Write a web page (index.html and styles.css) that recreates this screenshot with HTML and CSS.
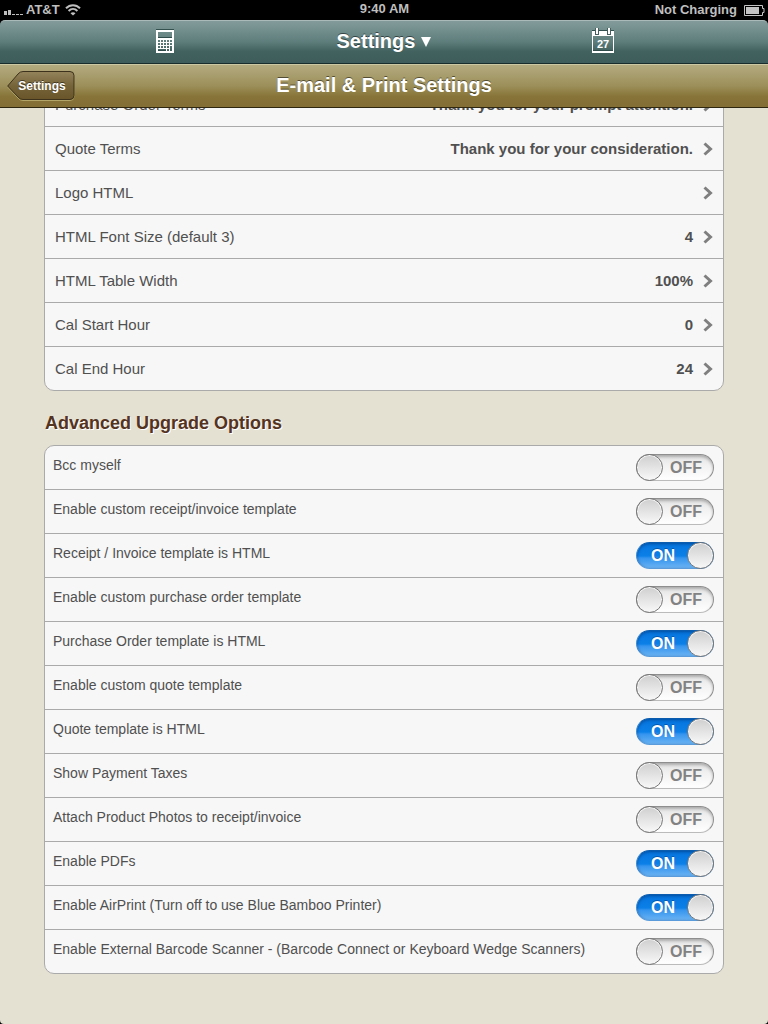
FILE: index.html
```html
<!DOCTYPE html>
<html lang="en">
<head>
    <meta charset="UTF-8">
    <meta name="viewport" content="width=device-width, initial-scale=1.0">
    <title>E-mail &amp; Print Settings</title>
    <link rel="stylesheet" href="styles.css">
</head>
<body>
    <div class="status-bar">
        <div class="carrier">
            <svg width="20" height="6" viewBox="0 0 20 6" fill="#bfbfbf">
                <path d="M0 1h3v4H0zM4 0h3v5H4zM8 4h3v1H8zM12 4h3v1h-3zM16 4h3v1h-3z"/>
            </svg>
            <span>AT&amp;T</span>
            <svg class="wifi" width="16" height="12" viewBox="0 0 16 12" fill="none" stroke="#bfbfbf" stroke-width="2">
                <path d="M1 4.3C5 .2 11 .2 15 4.3M3.6 7c2.6-2.6 6.2-2.6 8.8 0"/>
                <path d="M8 11.5L5.5 9.2c1.5-1.3 3.5-1.3 5 0z" fill="#bfbfbf" stroke="none"/>
            </svg>
        </div>
        <div class="clock">9:40 AM</div>
        <div class="power">
            <span>Not Charging</span>
            <svg width="21" height="11" viewBox="0 0 21 11">
                <path d="M.5.5h18v3H20v4h-1.500v3H.5z" fill="none" stroke="#c4c4c4"/>
                <path d="M2 2h13v7H2z" fill="#c4c4c4"/>
            </svg>
        </div>
    </div>

    <header class="app-bar">
        <button class="icon-button" type="button" aria-label="Calculator">
            <svg width="18" height="25" viewBox="0 0 18 25">
                <path d="M0 0h18v2H0z" fill="#34514f"/>
                <path fill="#fff" fill-rule="evenodd" d="M0 1h18v23H0zM2 3v5h14V3zM2 11v2h2v-2zm3 0v2h2v-2zm3 0v2h2v-2zm3 0v2h2v-2zm3 0v2h2v-2zM2 14v2h2v-2zm3 0v2h2v-2zm3 0v2h2v-2zm3 0v2h2v-2zm3 0v2h2v-2zM2 17v2h2v-2zm3 0v2h2v-2zm3 0v2h2v-2zm3 0v2h2v-2zm3 0v5h2v-5zM2 20v2h8v-2zm9 0v2h2v-2z"/>
                <path d="M2 8h14v1H2zM2 21h8v1H2z" fill="#2f4c4b"/>
            </svg>
        </button>
        <button class="app-title" type="button">Settings <svg width="10" height="11" viewBox="0 0 10 11"><path d="M0 1h10L5 11z" fill="#fff"/></svg></button>
        <button class="icon-button" type="button" aria-label="Calendar">
            <svg width="22" height="26" viewBox="0 0 22 26">
                <path d="M0 2h22v2H0z" fill="#34514f"/>
                <path fill="#fff" fill-rule="evenodd" d="M0 3h22v22H0zM1 8v15h20V8z"/>
                <path d="M1 22h20v1H1z" fill="#2f4c4b"/>
                <path d="M3 0h4v7H3zM15 0h4v7h-4z" fill="#44615f"/>
                <path d="M4 0h2v6H4zM16 0h2v6h-2z" fill="#fff"/>
                <text class="day" x="11" y="20">27</text>
            </svg>
        </button>
    </header>

    <nav class="page-bar">
        <button class="back" type="button">
            <svg width="70" height="31" viewBox="0 0 70 31">
                <defs>
                    <linearGradient id="backFill" x1="0" y1="0" x2="0" y2="1">
                        <stop offset="0" stop-color="#94845c"/>
                        <stop offset="0.5" stop-color="#76643a"/>
                        <stop offset="1" stop-color="#695529"/>
                    </linearGradient>
                </defs>
                <path d="M1 16.500L11 4q2-2.500 5-2.500h47q4 0 4 4v20q0 4-4 4H16q-3 0-5-2.500z" fill="none" stroke="#b3a568"/>
                <path d="M.7 15L11 3Q13 .5 16 .5h47q4 0 4 4v20q0 4-4 4H16q-3 0-5-2.500z" fill="url(#backFill)" stroke="#3d321b"/>
            </svg>
            <span>Settings</span>
        </button>
        <h1>E-mail &amp; Print Settings</h1>
    </nav>

    <svg class="defs" width="0" height="0">
        <symbol id="chevron" viewBox="0 0 10 14">
            <path d="M1.500 1.500L7.500 7l-6 5.500" fill="none" stroke="#7f7f7f" stroke-width="3"/>
        </symbol>
    </svg>

    <main class="content">
        <ul class="group scrolled">
            <li><button class="row" type="button"><span>Purchase Order Terms</span><b>Thank you for your prompt attention.</b><svg class="chevron"><use href="#chevron"/></svg></button></li>
            <li><button class="row" type="button"><span>Quote Terms</span><b>Thank you for your consideration.</b><svg class="chevron"><use href="#chevron"/></svg></button></li>
            <li><button class="row" type="button"><span>Logo HTML</span><b></b><svg class="chevron"><use href="#chevron"/></svg></button></li>
            <li><button class="row" type="button"><span>HTML Font Size (default 3)</span><b>4</b><svg class="chevron"><use href="#chevron"/></svg></button></li>
            <li><button class="row" type="button"><span>HTML Table Width</span><b>100%</b><svg class="chevron"><use href="#chevron"/></svg></button></li>
            <li><button class="row" type="button"><span>Cal Start Hour</span><b>0</b><svg class="chevron"><use href="#chevron"/></svg></button></li>
            <li><button class="row" type="button"><span>Cal End Hour</span><b>24</b><svg class="chevron"><use href="#chevron"/></svg></button></li>
        </ul>

        <h2>Advanced Upgrade Options</h2>

        <ul class="group">
            <li class="option">
                <label for="bcc">Bcc myself</label>
                <span class="switch"><input type="checkbox" id="bcc"><span class="state">OFF</span></span>
            </li>
            <li class="option">
                <label for="receipt">Enable custom receipt/invoice template</label>
                <span class="switch"><input type="checkbox" id="receipt"><span class="state">OFF</span></span>
            </li>
            <li class="option">
                <label for="receiptHtml">Receipt / Invoice template is HTML</label>
                <span class="switch"><input type="checkbox" id="receiptHtml" checked><span class="state">ON</span></span>
            </li>
            <li class="option">
                <label for="order">Enable custom purchase order template</label>
                <span class="switch"><input type="checkbox" id="order"><span class="state">OFF</span></span>
            </li>
            <li class="option">
                <label for="orderHtml">Purchase Order template is HTML</label>
                <span class="switch"><input type="checkbox" id="orderHtml" checked><span class="state">ON</span></span>
            </li>
            <li class="option">
                <label for="quote">Enable custom quote template</label>
                <span class="switch"><input type="checkbox" id="quote"><span class="state">OFF</span></span>
            </li>
            <li class="option">
                <label for="quoteHtml">Quote template is HTML</label>
                <span class="switch"><input type="checkbox" id="quoteHtml" checked><span class="state">ON</span></span>
            </li>
            <li class="option">
                <label for="taxes">Show Payment Taxes</label>
                <span class="switch"><input type="checkbox" id="taxes"><span class="state">OFF</span></span>
            </li>
            <li class="option">
                <label for="photos">Attach Product Photos to receipt/invoice</label>
                <span class="switch"><input type="checkbox" id="photos"><span class="state">OFF</span></span>
            </li>
            <li class="option">
                <label for="pdfs">Enable PDFs</label>
                <span class="switch"><input type="checkbox" id="pdfs" checked><span class="state">ON</span></span>
            </li>
            <li class="option">
                <label for="airprint">Enable AirPrint (Turn off to use Blue Bamboo Printer)</label>
                <span class="switch"><input type="checkbox" id="airprint" checked><span class="state">ON</span></span>
            </li>
            <li class="option">
                <label for="scanner">Enable External Barcode Scanner - (Barcode Connect or Keyboard Wedge Scanners)</label>
                <span class="switch"><input type="checkbox" id="scanner"><span class="state">OFF</span></span>
            </li>
        </ul>
    </main>

    <script src="script.js"></script>
</body>
</html>
```
FILE: styles.css
```css
*, *::before {
    box-sizing: border-box;
}
html {
    background: #000;
}
body {
    margin: 0;
    height: 100vh;
    display: flex;
    flex-direction: column;
    overflow: hidden;
    background: #000;
    font-family: "Liberation Sans", Arial, sans-serif;
    color: #505050;
}
button {
    font-family: inherit;
    border: 0;
    padding: 0;
    margin: 0;
    background: none;
    color: inherit;
    cursor: pointer;
}
svg {
    display: block;
    flex: none;
}

/* status bar */
.status-bar {
    display: grid;
    grid-template-columns: 1fr auto 1fr;
    align-items: center;
    height: 20px;
    flex: none;
    padding: 0 3px 0 4px;
    color: #bfbfbf;
    font-size: 13px;
    line-height: 18px;
    font-weight: bold;
}
.carrier, .power {
    display: flex;
    align-items: center;
}
.carrier {
    gap: 2px;
}
.carrier svg:first-child {
    align-self: flex-end;
    margin-bottom: 3px;
}
.carrier .wifi {
    margin-left: 3px;
}
.clock {
    padding-bottom: 2px;
}
.power {
    justify-content: flex-end;
    gap: 7px;
}

/* toolbars */
.app-bar {
    display: grid;
    grid-template-columns: 1fr 1fr 1fr;
    align-items: center;
    justify-items: center;
    height: 44px;
    flex: none;
    padding: 0 56px 2px;
    border-top: 1px solid #a9bab9;
    border-bottom: 1px solid #192d2d;
    border-radius: 5px 5px 0 0;
    background: linear-gradient(#839c9b, #5d7d7b 50%, #42625f 72%, #3d5c5b);
}
.app-title {
    display: flex;
    align-items: center;
    gap: 6px;
    color: #fff;
    font-size: 20px;
    line-height: 24px;
    font-weight: bold;
    text-shadow: 0 -1px 0 rgba(0, 0, 0, 0.5);
}
.day {
    fill: #fff;
    font-size: 11px;
    font-weight: bold;
    text-anchor: middle;
}
.page-bar {
    display: grid;
    grid-template-columns: 1fr auto 1fr;
    align-items: center;
    height: 44px;
    flex: none;
    padding: 0 7px;
    border-top: 1px solid #cdc8a4;
    border-bottom: 1px solid #2f2610;
    background: linear-gradient(#b3aa80, #9c8f59 50%, #877438 75%, #836e36);
}
.page-bar h1 {
    margin: 0;
    padding-bottom: 2px;
    color: #fff;
    font-size: 20px;
    line-height: 24px;
    text-shadow: 0 -1px 0 rgba(0, 0, 0, 0.5);
}
.back {
    display: grid;
    place-items: center;
    justify-self: start;
    color: #fff;
    font-size: 12px;
    line-height: 16px;
    font-weight: bold;
    text-shadow: 0 -1px 0 rgba(0, 0, 0, 0.5);
}
.back > * {
    grid-area: 1 / 1;
}

/* settings lists */
.content {
    flex: 1;
    min-height: 0;
    overflow: hidden;
    padding: 0 44px;
    background: #e4e1d2;
    border-radius: 0 0 4px 4px;
}
.content h2 {
    margin: 0;
    padding: 20px 1px 10px;
    color: #54331f;
    font-size: 18px;
    line-height: 24px;
    text-shadow: 1px 1px 0 #fff;
}
.group {
    list-style: none;
    margin: 0;
    padding: 0;
    border: 1px solid #aaa;
    border-radius: 10px;
    background: #f7f7f7;
}
/* first group sits partly under the toolbar */
.scrolled {
    margin-top: -26px;
}
.group li {
    height: 44px;
    border-bottom: 1px solid #aaa;
}
.group li:last-child {
    height: 43px;
    border-bottom: 0;
}
.row {
    display: flex;
    align-items: center;
    width: 100%;
    height: 43px;
    padding: 0 10px;
    font-size: 15px;
    line-height: 20px;
    text-align: left;
}
.row b {
    margin-left: auto;
}
.chevron {
    width: 10px;
    height: 14px;
    margin-left: 10px;
}
.option {
    display: flex;
    align-items: center;
    justify-content: space-between;
    padding: 0 9px 0 8px;
}
.option label {
    padding-bottom: 6px;
    font-size: 14px;
    line-height: 20px;
}

/* on/off switch */
.switch {
    display: grid;
    grid-template-rows: 27px;
    width: 78px;
    flex: none;
}
.switch > * {
    grid-area: 1 / 1;
}
.switch input {
    appearance: none;
    display: flex;
    margin: 0;
    border: 1px solid #8e8e8e;
    border-bottom-color: #bbb;
    border-radius: 14px;
    background: linear-gradient(#e2e2e2, #f1f1f1 40%, #fff);
    box-shadow: inset 0 2px 3px rgba(0, 0, 0, 0.25);
    cursor: pointer;
}
.switch input::before {
    content: "";
    width: 27px;
    height: 27px;
    margin: -1px;
    border: 1px solid #777;
    border-radius: 50%;
    background: linear-gradient(#cfcfcf, #f8f8f8);
    box-shadow: inset 0 0 0 1px #f4f4f4;
}
.switch input:checked {
    justify-content: flex-end;
    border-color: #0b5cae #3f86cb #5a9bdb #3f86cb;
    background: linear-gradient(#0574dd, #0c80e8 52%, #3494ee 60%, #6bb4f4);
    box-shadow: inset 0 1px 3px rgba(0, 40, 100, 0.5);
}
.state {
    align-self: center;
    padding: 1px 12px 0 0;
    color: #828282;
    font-size: 16px;
    line-height: 20px;
    font-weight: bold;
    text-align: right;
    pointer-events: none;
}
input:checked + .state {
    padding: 1px 0 0 15px;
    color: #fff;
    text-align: left;
    text-shadow: 0 -1px 0 rgba(0, 50, 120, 0.5);
}
```
FILE: script.js
```js
document.querySelectorAll('.switch input').forEach(function (input) {
    input.addEventListener('change', function () {
        input.nextElementSibling.textContent = input.checked ? 'ON' : 'OFF';
    });
});
```
